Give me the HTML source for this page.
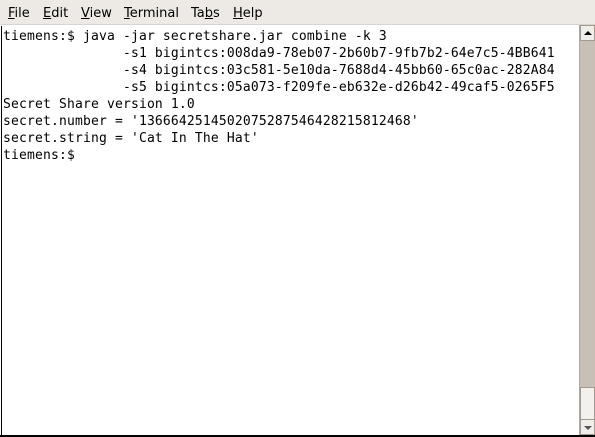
<!DOCTYPE html>
<html><head><style>
body{margin:0;width:595px;height:437px;overflow:hidden;background:#fff;position:relative;font-family:"DejaVu Sans",sans-serif}
#menu{position:absolute;left:0;top:0;width:595px;height:25px;background:#edeae6;border-bottom:1px solid #d8d4cf;box-sizing:border-box}
#menu span{position:absolute;top:6px;font-size:13px;color:#000}
#menu u{text-decoration:underline}
#term{position:absolute;left:1px;top:26px;width:577px;height:410px;background:#fff;border-left:1px solid #000}
pre{margin:0;position:absolute;left:1px;top:2px;font-family:"DejaVu Sans Mono",monospace;font-size:13px;line-height:17px;letter-spacing:0.17px;color:#000}
#sb{position:absolute;left:579px;top:25px;width:16px;height:411px;background:#c8c0b7;border-left:1px solid #aaa;box-sizing:border-box}
.btn{position:absolute;left:0;width:15px;height:16px;background:#f0eeeb;border:1px solid #a39b92;box-sizing:border-box}
#thumb{position:absolute;left:0;top:362px;width:15px;height:34px;background:#f3f1ee;border:1px solid #a39b92;box-sizing:border-box}
#bot{position:absolute;left:0;top:435px;width:595px;height:2px;background:#000}
</style></head><body>
<div id="menu">
<span style="left:8px"><u>F</u>ile</span>
<span style="left:43px"><u>E</u>dit</span>
<span style="left:81px"><u>V</u>iew</span>
<span style="left:124px"><u>T</u>erminal</span>
<span style="left:191px">Ta<u>b</u>s</span>
<span style="left:233px"><u>H</u>elp</span>
</div>
<div id="term"><pre>tiemens:$ java -jar secretshare.jar combine -k 3
               -s1 bigintcs:008da9-78eb07-2b60b7-9fb7b2-64e7c5-4BB641
               -s4 bigintcs:03c581-5e10da-7688d4-45bb60-65c0ac-282A84
               -s5 bigintcs:05a073-f209fe-eb632e-d26b42-49caf5-0265F5
Secret Share version 1.0
secret.number = '1366642514502075287546428215812468'
secret.string = 'Cat In The Hat'
tiemens:$</pre></div>
<div id="sb">
<div class="btn" style="top:0"><div style="position:absolute;left:3px;top:5px;width:0;height:0;border-left:4px solid transparent;border-right:4px solid transparent;border-bottom:4px solid #000"></div></div>
<div id="thumb"></div>
<div class="btn" style="top:394px"><div style="position:absolute;left:3px;top:6px;width:0;height:0;border-left:4px solid transparent;border-right:4px solid transparent;border-top:4px solid #555"></div></div>
</div>
<div id="bot"></div>
</body></html>
